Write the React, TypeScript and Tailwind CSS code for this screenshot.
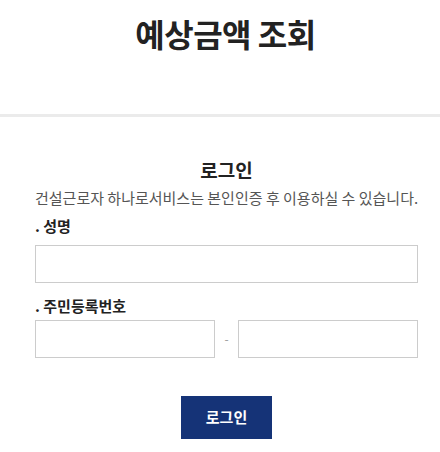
import React from "react";

export default function App() {
  return (
    <div
      className="w-[440px] h-[452px] bg-white overflow-hidden"
      style={{ fontFamily: '"Noto Sans CJK KR", "Noto Sans", sans-serif' }}
    >
      <div className="h-[114px] pt-[11px] pl-[11px] flex justify-center">
        <h1 className="text-[32px] leading-[44px] font-bold text-[#222] tracking-[-0.5px]">예상금액 조회</h1>
      </div>
      <div className="h-[3px] bg-[#ebebeb]" />
      <div className="pl-[35px] pr-[22px] pt-[39px]">
        <h2 className="text-center text-[19px] leading-[28px] font-bold text-[#222]">로그인</h2>
        <p className="text-center text-[15px] leading-[22px] text-[#555] mt-[3px] whitespace-nowrap">
          건설근로자 하나로서비스는 본인인증 후 이용하실 수 있습니다.
        </p>
        <label className="block mt-[6px] text-[15px] leading-[22px] font-bold text-[#222]">. 성명</label>
        <input className="mt-[8px] block w-full h-[38px] border border-[#cccccc] outline-none" />
        <label className="block mt-[12px] text-[15px] leading-[22px] font-bold text-[#222]">. 주민등록번호</label>
        <div className="mt-[3px] flex items-center">
          <input className="w-[180px] h-[38px] border border-[#cccccc] outline-none" />
          <span className="flex-1 text-center text-[12px] text-[#999]">-</span>
          <input className="w-[180px] h-[38px] border border-[#cccccc] outline-none" />
        </div>
        <div className="flex justify-center mt-[38px]">
          <button className="w-[91px] h-[43px] bg-[#153377] text-white text-[15px] font-bold">로그인</button>
        </div>
      </div>
    </div>
  );
}
